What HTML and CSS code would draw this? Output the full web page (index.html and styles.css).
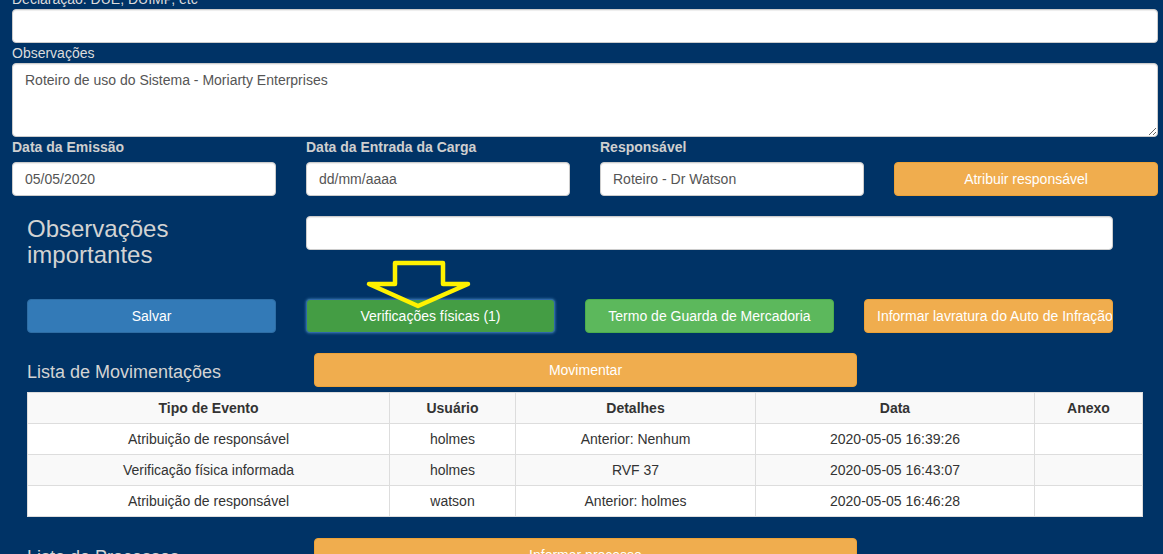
FILE: index.html
```html
<!DOCTYPE html>
<html lang="pt">
<head>
<meta charset="utf-8">
<title>Processo</title>
<link rel="stylesheet" href="styles.css">
</head>
<body>
<div class="page">
  <div class="top">
    <label class="lbl">Declaração: DUE, DUIMP, etc</label>
    <input class="fc" type="text">
    <label class="lbl">Observações</label>
    <textarea class="fc ta">Roteiro de uso do Sistema - Moriarty Enterprises</textarea>
    <div class="grid4">
      <div class="fg"><label class="lbl b">Data da Emissão</label><input class="fc" type="text" value="05/05/2020"></div>
      <div class="fg"><label class="lbl b">Data da Entrada da Carga</label><input class="fc" type="text" value="dd/mm/aaaa"></div>
      <div class="fg"><label class="lbl b">Responsável</label><input class="fc" type="text" value="Roteiro - Dr Watson"></div>
      <div class="fg"><label class="lbl b">&nbsp;</label><button class="btn warn">Atribuir responsável</button></div>
    </div>
  </div>

  <div class="inner">
    <div class="obs-row">
      <h3 class="obs-title">Observações importantes</h3>
      <input class="fc obs-input" type="text">
    </div>
    <div class="btn-row">
      <button class="btn primary">Salvar</button>
      <button class="btn success-active">Verificações físicas (1)</button>
      <button class="btn success">Termo de Guarda de Mercadoria</button>
      <button class="btn warn clip">Informar lavratura do Auto de Infração</button>
    </div>
    <svg class="arrow" width="120" height="60" viewBox="0 0 120 60">
      <polygon points="35,9 83,9 83,30 108,30 58,52 9,30 35,30" fill="none" stroke="#fff200" stroke-width="4.5" stroke-linejoin="round"/>
    </svg>
  </div>

  <div class="list-row">
    <h4 class="list-title">Lista de Movimentações</h4>
    <button class="btn warn">Movimentar</button>
  </div>

  <table class="tbl">
    <thead>
      <tr><th class="c1">Tipo de Evento</th><th class="c2">Usuário</th><th class="c3">Detalhes</th><th class="c4">Data</th><th class="c5">Anexo</th></tr>
    </thead>
    <tbody>
      <tr><td>Atribuição de responsável</td><td>holmes</td><td>Anterior: Nenhum</td><td>2020-05-05 16:39:26</td><td></td></tr>
      <tr class="odd"><td>Verificação física informada</td><td>holmes</td><td>RVF 37</td><td>2020-05-05 16:43:07</td><td></td></tr>
      <tr><td>Atribuição de responsável</td><td>watson</td><td>Anterior: holmes</td><td>2020-05-05 16:46:28</td><td></td></tr>
    </tbody>
  </table>

  <div class="list-row bottom">
    <h4 class="list-title">Lista de Processos</h4>
    <button class="btn warn">Informar processo</button>
  </div>
</div>
</body>
</html>
```

FILE: styles.css
```css
* { box-sizing: border-box; }
html, body { margin: 0; padding: 0; }
body {
  background: #003366;
  font-family: "Liberation Sans", Arial, sans-serif;
  font-size: 14px;
  line-height: 20px;
  color: #333;
}
.page {
  width: 1163px;
  height: 554px;
  overflow: hidden;
  position: relative;
}
.top {
  margin-top: -11px;
  padding-left: 12px;
  width: 1158px;
}
.lbl {
  display: block;
  color: #dcdcdc;
  font-weight: normal;
  line-height: 20px;
}
.lbl.b {
  font-weight: bold;
  color: #cfcfcf;
  margin-bottom: 5px;
}
.fc {
  display: block;
  width: 100%;
  height: 34px;
  padding: 6px 12px;
  font-family: "Liberation Sans", Arial, sans-serif;
  font-size: 14px;
  line-height: 20px;
  color: #555;
  background: #fff;
  border: 1px solid #ccc;
  border-radius: 4px;
  box-shadow: inset 0 1px 1px rgba(0,0,0,.075);
  outline: none;
}
.ta {
  height: 74px;
  resize: vertical;
}
.grid4 {
  display: grid;
  grid-template-columns: repeat(4, 264px);
  column-gap: 30px;
}
.btn {
  display: block;
  width: 100%;
  height: 34px;
  padding: 6px 12px;
  font-family: "Liberation Sans", Arial, sans-serif;
  font-size: 14px;
  line-height: 20px;
  color: #fff;
  text-align: center;
  border: 1px solid transparent;
  border-radius: 4px;
  white-space: nowrap;
  overflow: hidden;
}
.warn { background: #f0ad4e; border-color: #eea236; }
.primary { background: #337ab7; border-color: #2e6da4; }
.success { background: #5cb85c; border-color: #4cae4c; }
.success-active {
  background: #449d44;
  border-color: #2f67a8;
  box-shadow: 0 0 3px rgba(102,175,233,.7);
}
.clip { text-align: left; }

.inner {
  position: relative;
  margin-left: 27px;
  width: 1086px;
  margin-top: 20px;
}
.obs-row {
  display: grid;
  grid-template-columns: 249px 807px;
  column-gap: 30px;
  align-items: start;
}
.obs-title {
  margin: 0;
  font-size: 24px;
  line-height: 26px;
  font-weight: normal;
  color: #d3d3d3;
}
.btn-row {
  margin-top: 31px;
  display: grid;
  grid-template-columns: repeat(4, 249px);
  column-gap: 30px;
}
.arrow {
  position: absolute;
  left: 333px;
  top: 38px;
}
.list-row {
  margin-left: 27px;
  margin-top: 20px;
  display: grid;
  grid-template-columns: 257px 543px;
  column-gap: 30px;
  align-items: center;
}
.list-title {
  margin: 0;
  padding-top: 3px;
  font-size: 18px;
  line-height: 20px;
  font-weight: normal;
  color: #d3d3d3;
}
.tbl {
  margin: 5px 0 0 27px;
  width: 1115px;
  border-collapse: collapse;
  background: #fff;
  table-layout: fixed;
}
.tbl th, .tbl td {
  border: 1px solid #ddd;
  padding: 5px 8px;
  line-height: 20px;
  text-align: center;
  color: #333;
}
.tbl th { font-weight: bold; }
.tbl thead tr, .tbl tr.odd { background: #f9f9f9; }
.c1 { width: 362px; }
.c2 { width: 126px; }
.c3 { width: 240px; }
.c4 { width: 279px; }
.c5 { width: 108px; }
.list-row.bottom { margin-top: 21px; }
```
